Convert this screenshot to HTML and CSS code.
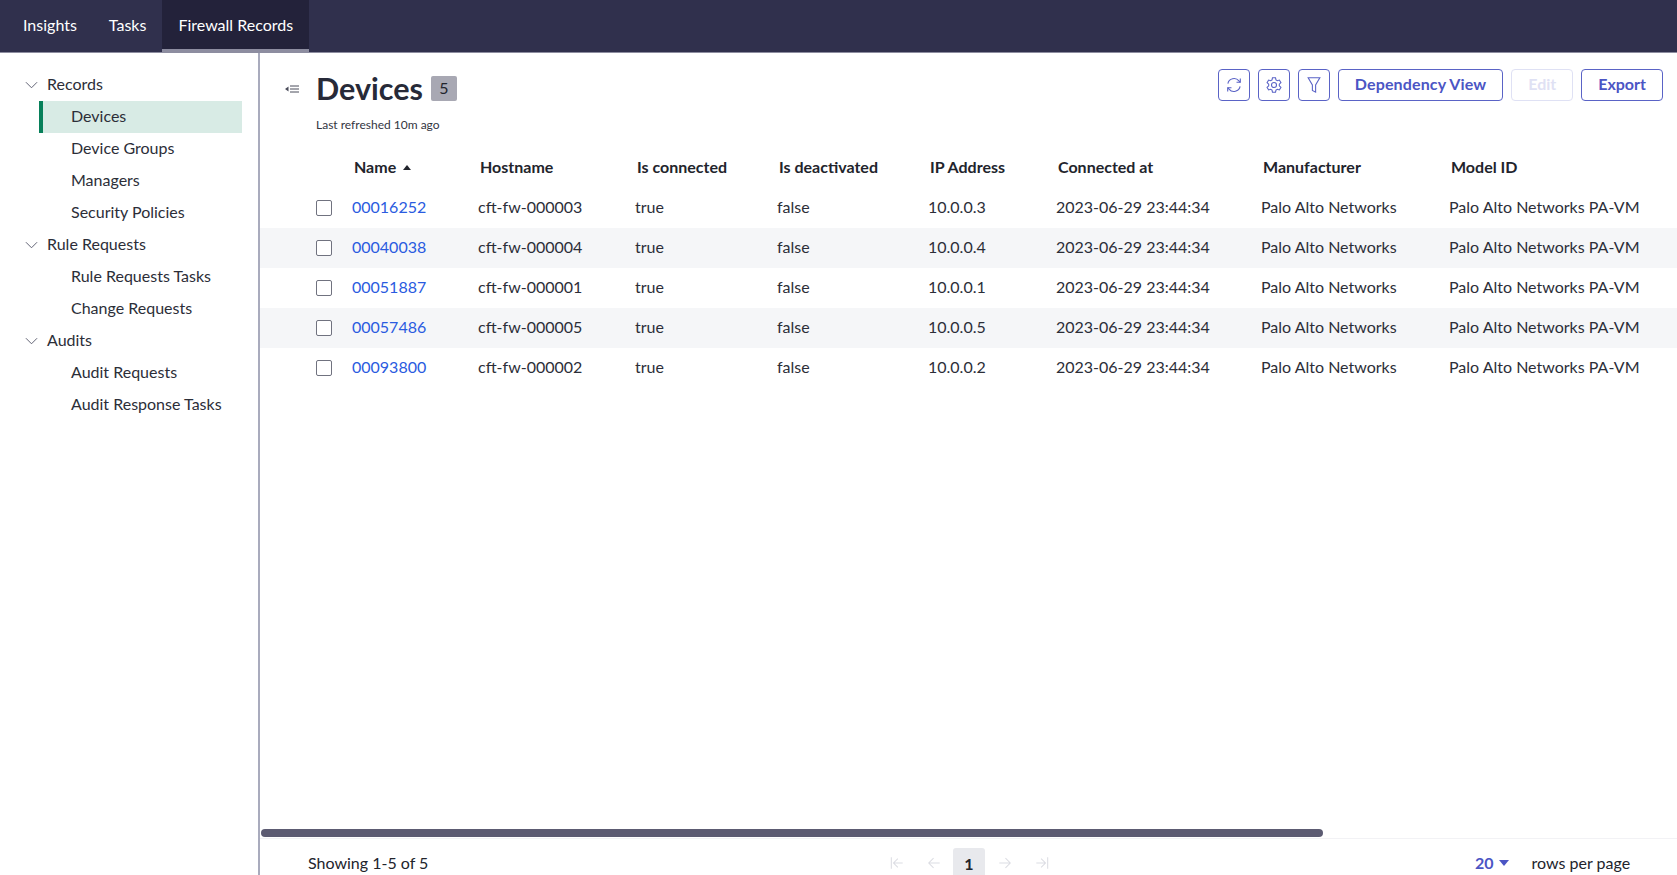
FILE: index.html
```html
<!DOCTYPE html>
<html>
<head>
    <title>Devices</title>
    <link rel="stylesheet" href="styles.css">
</head>
<body>
    <nav class="topbar">
        <a class="tab">Insights</a>
        <a class="tab">Tasks</a>
        <a class="tab tab-active">Firewall Records</a>
    </nav>
    <div class="layout">
        <aside class="sidebar">
            <div class="side-group">
                <svg class="chevron" viewBox="0 0 14 8"><path d="M1 1l6 6 6-6"/></svg>
                <span>Records</span>
            </div>
            <a class="side-item side-item-active">Devices</a>
            <a class="side-item">Device Groups</a>
            <a class="side-item">Managers</a>
            <a class="side-item">Security Policies</a>
            <div class="side-group">
                <svg class="chevron" viewBox="0 0 14 8"><path d="M1 1l6 6 6-6"/></svg>
                <span>Rule Requests</span>
            </div>
            <a class="side-item">Rule Requests Tasks</a>
            <a class="side-item">Change Requests</a>
            <div class="side-group">
                <svg class="chevron" viewBox="0 0 14 8"><path d="M1 1l6 6 6-6"/></svg>
                <span>Audits</span>
            </div>
            <a class="side-item">Audit Requests</a>
            <a class="side-item">Audit Response Tasks</a>
        </aside>
        <main class="content">
            <header class="page-head">
                <svg class="collapse-icon" viewBox="0 0 14 10"><path d="M5 2h9M5 5h9M5 8h9"/><path class="fill" d="M0 5l3.500-2.500v5z"/></svg>
                <div class="title-block">
                    <div class="title-row">
                        <h1>Devices</h1>
                        <span class="count">5</span>
                    </div>
                    <div class="refreshed">Last refreshed 10m ago</div>
                </div>
                <div class="actions">
                    <button class="btn btn-icon">
                        <svg viewBox="0 0 20 20"><path d="M3.200 8.500A7 7 0 0 1 15.500 5.500l1.500 1.500"/><path d="M17 2.800V7h-4.200"/><path d="M16.800 11.500A7 7 0 0 1 4.500 14.500L3 13"/><path d="M3 17.200V13h4.200"/></svg>
                    </button>
                    <button class="btn btn-icon">
                        <svg viewBox="0 0 20 20"><path d="M8.300 2h3.400l.5 2.400 1.500.9 2.300-.8 1.700 3-1.800 1.600v1.800l1.800 1.600-1.700 3-2.300-.8-1.500.9-.5 2.400H8.300l-.5-2.400-1.500-.9-2.300.8-1.700-3 1.800-1.600V9.100L2.300 7.500l1.700-3 2.300.8 1.500-.9z"/><circle cx="10" cy="10" r="2.800"/></svg>
                    </button>
                    <button class="btn btn-icon">
                        <svg viewBox="0 0 20 20"><path d="M3.500 2h13l-4.700 8v8l-3.600-2v-6z"/></svg>
                    </button>
                    <button class="btn btn-wide">Dependency View</button>
                    <button class="btn btn-disabled">Edit</button>
                    <button class="btn">Export</button>
                </div>
            </header>
            <div class="table-wrap">
                <table class="grid">
                    <colgroup>
                        <col class="col-check"><col class="col-name"><col class="col-host"><col class="col-conn"><col class="col-deact"><col class="col-ip"><col class="col-date"><col class="col-maker"><col class="col-model">
                    </colgroup>
                    <thead>
                        <tr>
                            <th></th>
                            <th>Name <span class="sort-caret"></span></th>
                            <th>Hostname</th>
                            <th>Is connected</th>
                            <th>Is deactivated</th>
                            <th>IP Address</th>
                            <th>Connected at</th>
                            <th>Manufacturer</th>
                            <th>Model ID</th>
                        </tr>
                    </thead>
                    <tbody>
                        <tr>
                            <td><span class="checkbox"></span></td>
                            <td><a class="link">00016252</a></td>
                            <td>cft-fw-000003</td><td>true</td><td>false</td><td>10.0.0.3</td>
                            <td>2023-06-29 23:44:34</td><td>Palo Alto Networks</td><td>Palo Alto Networks PA-VM</td>
                        </tr>
                        <tr>
                            <td><span class="checkbox"></span></td>
                            <td><a class="link">00040038</a></td>
                            <td>cft-fw-000004</td><td>true</td><td>false</td><td>10.0.0.4</td>
                            <td>2023-06-29 23:44:34</td><td>Palo Alto Networks</td><td>Palo Alto Networks PA-VM</td>
                        </tr>
                        <tr>
                            <td><span class="checkbox"></span></td>
                            <td><a class="link">00051887</a></td>
                            <td>cft-fw-000001</td><td>true</td><td>false</td><td>10.0.0.1</td>
                            <td>2023-06-29 23:44:34</td><td>Palo Alto Networks</td><td>Palo Alto Networks PA-VM</td>
                        </tr>
                        <tr>
                            <td><span class="checkbox"></span></td>
                            <td><a class="link">00057486</a></td>
                            <td>cft-fw-000005</td><td>true</td><td>false</td><td>10.0.0.5</td>
                            <td>2023-06-29 23:44:34</td><td>Palo Alto Networks</td><td>Palo Alto Networks PA-VM</td>
                        </tr>
                        <tr>
                            <td><span class="checkbox"></span></td>
                            <td><a class="link">00093800</a></td>
                            <td>cft-fw-000002</td><td>true</td><td>false</td><td>10.0.0.2</td>
                            <td>2023-06-29 23:44:34</td><td>Palo Alto Networks</td><td>Palo Alto Networks PA-VM</td>
                        </tr>
                    </tbody>
                </table>
            </div>
            <div class="scroll-track"><div class="scroll-thumb"></div></div>
            <footer class="pager">
                <div class="pager-info">Showing 1-5 of 5</div>
                <div class="pager-pages">
                    <svg class="page-arrow" viewBox="0 0 16 16"><path d="M1.500 1.500v13M14.500 8H4M9 3L4 8l5 5"/></svg>
                    <svg class="page-arrow" viewBox="0 0 16 16"><path d="M14.500 8H2M7.500 2.500L2 8l5.500 5.500"/></svg>
                    <span class="page-num">1</span>
                    <svg class="page-arrow" viewBox="0 0 16 16"><path d="M1.500 8H14M8.500 2.500L14 8l-5.500 5.500"/></svg>
                    <svg class="page-arrow" viewBox="0 0 16 16"><path d="M14.500 1.500v13M1.500 8H12M7 3l5 5-5 5"/></svg>
                </div>
                <div class="pager-size">
                    <span class="size-value">20</span>
                    <span class="size-caret"></span>
                    <span class="size-label">rows per page</span>
                </div>
            </footer>
        </main>
    </div>
</body>
</html>
```

FILE: styles.css
```css
* {
    box-sizing: border-box;
}
html, body {
    height: 100%;
}
body {
    margin: 0;
    display: flex;
    flex-direction: column;
    overflow: hidden;
    background-color: #fff;
    color: #22242c;
    font-family: Lato, "Open Sans", sans-serif;
    font-size: 16px;
}
/* Top bar */
.topbar {
    flex: none;
    display: flex;
    height: 53px;
    padding-left: 7px;
    background-color: #30304d;
    border-bottom: 1px solid #8d8da0;
}
.tab {
    display: flex;
    align-items: center;
    padding: 0 16px 3px;
    color: #fff;
}
.tab-active {
    padding-left: 16px;
    padding-right: 16px;
    background-color: #23223a;
    box-shadow: inset 0 -3px 0 #8d8da0;
}
.layout {
    flex: 1;
    display: flex;
    min-height: 0;
}
/* Sidebar */
.sidebar {
    flex: none;
    width: 260px;
    padding: 16px 16px 0 25px;
    border-right: 2px solid #a9abbd;
}
.side-group {
    display: flex;
    align-items: center;
    gap: 9px;
    height: 32px;
    padding-bottom: 3px;
    color: #2c2e38;
}
.chevron {
    width: 13px;
    height: 8px;
    margin-top: 3px;
    fill: none;
    stroke: #55586a;
    stroke-width: 1;
}
.side-item {
    display: flex;
    align-items: center;
    height: 32px;
    margin-left: 14px;
    padding-left: 32px;
    padding-bottom: 3px;
    color: #2c2e38;
}
.side-item-active {
    padding-left: 28px;
    background-color: #d8ebe5;
    border-left: 4px solid #07805a;
}
/* Main content */
.content {
    flex: 1;
    min-width: 0;
    display: flex;
    flex-direction: column;
}
.page-head {
    flex: none;
    display: flex;
    align-items: flex-start;
    height: 95px;
    padding: 16px 14px 0 25px;
}
.collapse-icon {
    flex: none;
    width: 14px;
    height: 10px;
    margin-top: 15px;
    fill: none;
    stroke: #4a4c5a;
    stroke-width: 1;
}
.collapse-icon .fill {
    fill: #4a4c5a;
    stroke: none;
}
.title-block {
    margin-left: 17px;
    margin-top: -1px;
}
.title-row {
    display: flex;
    align-items: center;
    gap: 8px;
    height: 40px;
}
h1 {
    margin: 0;
    font-size: 30.500px;
    font-weight: 700;
    color: #272a38;
}
.count {
    display: flex;
    align-items: center;
    justify-content: center;
    width: 26px;
    height: 25px;
    border-radius: 2px;
    background-color: #a8a8b3;
    color: #22242c;
    padding-bottom: 2px;
}
.refreshed {
    margin-top: 9px;
    font-size: 12px;
    color: #33353f;
}
.actions {
    margin-left: auto;
    display: flex;
    gap: 8px;
}
.btn {
    height: 32px;
    padding: 0 16px 3px;
    border: 1.500px solid #5a63c6;
    border-radius: 4px;
    background-color: #fff;
    color: #4b55c4;
    font-family: inherit;
    font-size: 16px;
    font-weight: 700;
}
.btn-wide {
    letter-spacing: .13px;
}
.btn-icon {
    display: flex;
    align-items: center;
    justify-content: center;
    width: 32px;
    padding: 0;
}
.btn-icon svg {
    width: 18px;
    height: 18px;
    fill: none;
    stroke: #5a63c6;
    stroke-width: 1.200;
}
.btn-disabled {
    border-color: #dfe1f4;
    color: #dfe1f4;
}
/* Table */
.table-wrap {
    flex: 1;
    min-height: 0;
    overflow: hidden;
}
.grid {
    table-layout: fixed;
    width: 1417px;
    border-collapse: collapse;
}
.col-check { width: 92px; }
.col-name { width: 126px; }
.col-host { width: 157px; }
.col-conn { width: 142px; }
.col-deact { width: 151px; }
.col-ip { width: 128px; }
.col-date { width: 205px; }
.col-maker { width: 188px; }
.col-model { width: 228px; }
.grid th {
    height: 40px;
    padding: 0 0 3px 2px;
    text-align: left;
    font-weight: 700;
    color: #22242c;
    white-space: nowrap;
}
.grid td {
    height: 40px;
    padding: 0 0 3px;
    color: #2c2e38;
    white-space: nowrap;
}
.grid td:first-child {
    padding: 0 0 0 56px;
}
.grid tbody tr:nth-child(even) {
    background-color: #f5f6f8;
}
.sort-caret {
    display: inline-block;
    margin-left: 3px;
    vertical-align: 3px;
    border-left: 4.500px solid transparent;
    border-right: 4.500px solid transparent;
    border-bottom: 5px solid #22242c;
}
.checkbox {
    display: block;
    width: 16px;
    height: 16px;
    border: 1px solid #70727f;
    border-radius: 2px;
    background-color: #fff;
}
.link {
    color: #2a5be0;
}
/* Fake horizontal scrollbar */
.scroll-track {
    flex: none;
    height: 11px;
    padding: 1px 0 2px 1px;
    border-bottom: 1px solid #f2f2f5;
}
.scroll-thumb {
    width: 1062px;
    height: 8px;
    border-radius: 4px;
    background-color: #5c5b72;
}
/* Pager */
.pager {
    flex: none;
    display: flex;
    align-items: flex-start;
    height: 36px;
    padding: 9px 0 0 48px;
}
.pager-info {
    width: 582px;
    margin-top: 5px;
}
.pager-pages {
    display: flex;
    align-items: center;
    gap: 23px;
    height: 32px;
}
.page-arrow {
    width: 14px;
    height: 14px;
    margin-top: -2px;
    fill: none;
    stroke: #dcdde3;
    stroke-width: 1.200;
}
.page-num {
    display: flex;
    align-items: center;
    justify-content: center;
    width: 32px;
    height: 32px;
    margin: 0 -10px 0 -11px;
    padding-bottom: 2px;
    border-radius: 3px 3px 0 0;
    background-color: #e8e9ed;
    font-weight: 700;
}
.pager-size {
    display: flex;
    align-items: center;
    margin-left: 426px;
    margin-top: 5px;
}
.size-value {
    color: #4b55c4;
    font-weight: 700;
}
.size-caret {
    margin-left: 5px;
    border-left: 5px solid transparent;
    border-right: 5px solid transparent;
    border-top: 6px solid #4b55c4;
}
.size-label {
    margin-left: 23px;
    white-space: nowrap;
}
```
